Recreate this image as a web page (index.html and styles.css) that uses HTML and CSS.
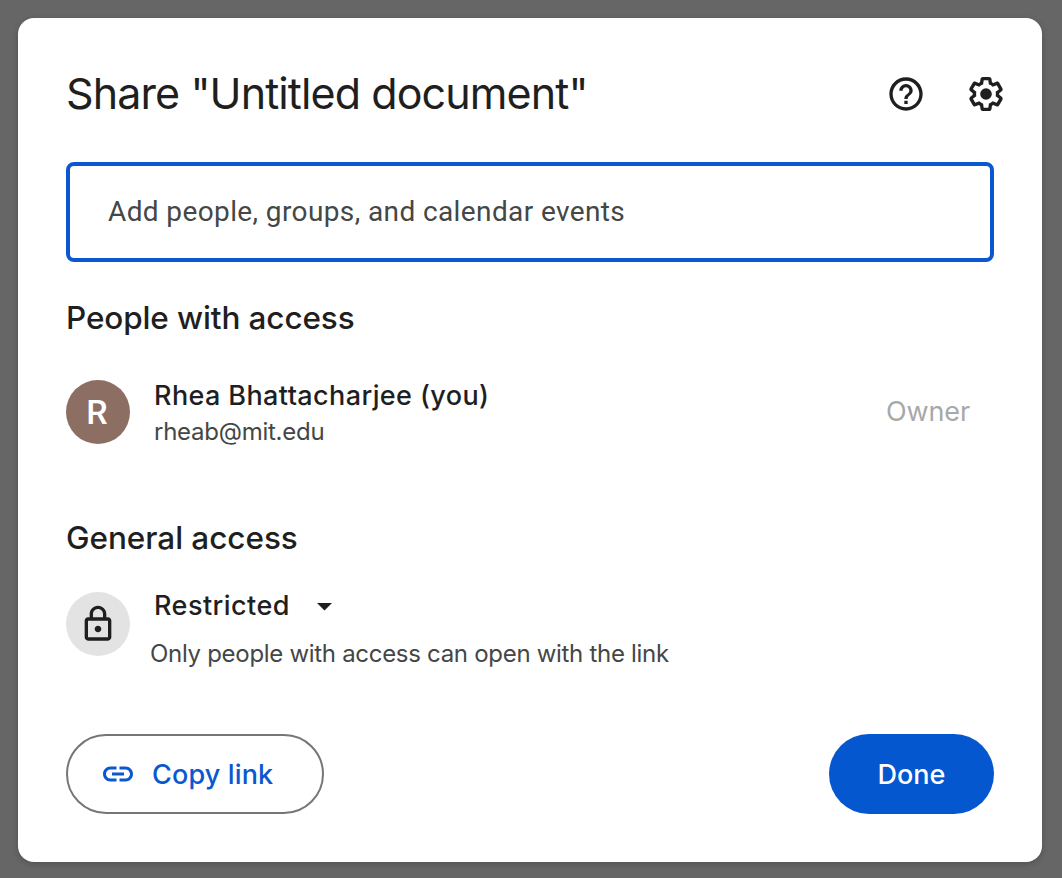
FILE: index.html
```html
<!DOCTYPE html>
<html lang="en">
<head>
<meta charset="utf-8">
<title>Share</title>
<link rel="stylesheet" href="styles.css">
</head>
<body>
<main class="dialog">
  <header class="header">
    <h1 class="title">Share "Untitled document"</h1>
    <div class="actions">
      <svg class="icon" viewBox="0 0 24 24"><path d="M11 18h2v-2h-2v2zm1-16C6.48 2 2 6.48 2 12s4.48 10 10 10 10-4.48 10-10S17.52 2 12 2zm0 18c-4.41 0-8-3.59-8-8s3.59-8 8-8 8 3.59 8 8-3.59 8-8 8zm0-14c-2.21 0-4 1.79-4 4h2c0-1.1.9-2 2-2s2 .9 2 2c0 2-3 1.75-3 5h2c0-2.25 3-2.5 3-5 0-2.21-1.79-4-4-4z"/></svg>
      <svg class="icon" viewBox="0 0 24 24"><path d="M13.85 22.25h-3.7c-.74 0-1.36-.54-1.45-1.27l-.27-1.89c-.27-.14-.53-.29-.79-.46l-1.8.72c-.7.26-1.47-.03-1.81-.65L2.2 15.53c-.35-.66-.2-1.44.36-1.88l1.53-1.19c-.01-.15-.02-.3-.02-.46 0-.15.01-.31.02-.46l-1.52-1.19c-.59-.45-.74-1.26-.37-1.88l1.85-3.19c.34-.62 1.11-.9 1.79-.63l1.81.73c.26-.17.52-.32.78-.46l.27-1.91c.09-.7.71-1.25 1.44-1.25h3.7c.74 0 1.36.54 1.45 1.27l.27 1.89c.27.14.53.29.79.46l1.8-.72c.71-.26 1.48.03 1.82.65l1.84 3.18c.36.66.2 1.44-.36 1.88l-1.52 1.19c.01.15.02.3.02.46s-.01.31-.02.46l1.52 1.19c.56.45.72 1.23.37 1.86l-1.86 3.22c-.34.62-1.11.9-1.8.63l-1.8-.72c-.26.17-.52.32-.78.46l-.27 1.91c-.1.68-.72 1.22-1.46 1.22zm-3.23-2h2.76l.37-2.55.53-.22c.44-.18.88-.44 1.34-.78l.45-.34 2.38.96 1.38-2.4-2.03-1.58.07-.56c.03-.26.06-.51.06-.78s-.03-.53-.06-.78l-.07-.56 2.03-1.58-1.39-2.4-2.39.96-.45-.35c-.42-.32-.87-.58-1.33-.77l-.52-.22-.37-2.55h-2.76l-.37 2.55-.53.21c-.44.19-.88.44-1.34.79l-.45.33-2.38-.95-1.39 2.39 2.03 1.58-.07.56a7 7 0 0 0-.06.79c0 .26.02.53.06.78l.07.56-2.03 1.58 1.38 2.4 2.39-.96.45.35c.43.33.86.58 1.33.77l.53.22.38 2.55z"/><circle cx="12" cy="12" r="3.5"/></svg>
    </div>
  </header>
  <div class="field"><span class="placeholder">Add people, groups, and calendar events</span></div>
  <h2 class="heading people-heading">People with access</h2>
  <section class="row person">
    <div class="avatar">R</div>
    <div class="details">
      <span class="name">Rhea Bhattacharjee (you)</span>
      <span class="email">rheab@mit.edu</span>
    </div>
    <span class="role">Owner</span>
  </section>
  <h2 class="heading general-heading">General access</h2>
  <section class="row access">
    <div class="badge"><svg class="icon" viewBox="0 0 24 24"><path d="M18 8h-1V6c0-2.76-2.24-5-5-5S7 3.24 7 6v2H6c-1.1 0-2 .9-2 2v10c0 1.1.9 2 2 2h12c1.1 0 2-.9 2-2V10c0-1.1-.9-2-2-2zM9 6c0-1.66 1.34-3 3-3s3 1.34 3 3v2H9V6zm9 14H6V10h12v10zm-6-3c1.1 0 2-.9 2-2s-.9-2-2-2-2 .9-2 2 .9 2 2 2z"/></svg></div>
    <div class="access-details">
      <div class="select"><span class="level">Restricted</span><svg class="caret" viewBox="0 0 15 8"><path d="M0 0h15L7.500 7.500z"/></svg></div>
      <span class="hint">Only people with access can open with the link</span>
    </div>
  </section>
  <footer class="footer">
    <button class="button copy"><svg class="link-icon" viewBox="0 0 24 24"><path d="M11 17H7c-2.760 0-5-2.240-5-5s2.240-5 5-5h4v2H7c-1.660 0-3 1.340-3 3s1.340 3 3 3h4v2zm-3-4v-2h8v2H8zm5 4v-2h4c1.660 0 3-1.340 3-3s-1.340-3-3-3h-4V7h4c2.760 0 5 2.240 5 5s-2.240 5-5 5h-4z"/></svg><span>Copy link</span></button>
    <button class="button done">Done</button>
  </footer>
</main>
</body>
</html>
```
FILE: styles.css
```css
* { box-sizing: border-box; }
body {
  margin: 0;
  padding: 18px 20px 16px 18px;
  height: 878px;
  background: #666;
  color: #1f1f1f;
  font-family: Inter, sans-serif;
}
.dialog {
  height: 844px;
  padding: 48px;
  background: #fff;
  border-radius: 16px;
  box-shadow: 0 2px 6px rgba(0, 0, 0, .2);
  white-space: nowrap;
}
.header { display: flex; justify-content: space-between; height: 56px; align-items: center; margin-right: -14px; }
.title { margin: 0; padding-bottom: 2px; font-size: 43px; font-weight: 400; line-height: 56px; letter-spacing: -.9px; }
.actions { display: flex; gap: 40px; margin-right: 2px; }
.icon { display: block; width: 40px; height: 40px; fill: #1f1f1f; }
.field {
  display: flex;
  align-items: center;
  height: 100px;
  margin-top: 40px;
  padding: 0 38px 2px;
  border: 4px solid #0b57d0;
  border-radius: 8px;
  color: #444746;
  font-family: Roboto, sans-serif;
  font-size: 28px;
  letter-spacing: .39px;
}
.heading { margin: 36px 0 0; font-size: 31.5px; line-height: 40px; font-weight: 500; }
.people-heading { letter-spacing: -.12px; }
.general-heading { letter-spacing: -.05px; }
.row { display: flex; }
.person { margin-top: 38px; height: 72px; }
.avatar, .badge {
  display: flex;
  flex: none;
  align-items: center;
  justify-content: center;
  width: 64px;
  height: 64px;
  margin-top: 4px;
  border-radius: 50%;
}
.avatar { padding-right: 2px; background: #8d6e63; color: #fff; font: 500 34px Roboto, sans-serif; }
.badge { margin-top: 8px; background: #e3e3e3; }
.details { display: flex; flex-direction: column; margin-left: 24px; flex: 1; }
.name { font-size: 27px; font-weight: 500; line-height: 40px; letter-spacing: .39px; }
.email { font-size: 24px; line-height: 32px; color: #444746; letter-spacing: -.25px; }
.role { align-self: center; margin-right: 24px; padding-bottom: 2px; font-size: 27px; color: #a8a8a8; letter-spacing: -.1px; }
.person + .heading { margin-top: 70px; }
.access { margin-top: 26px; height: 96px; }
.access-details { display: flex; flex-direction: column; margin-left: 20px; }
.select { display: flex; align-items: center; gap: 27px; height: 44px; padding-left: 4px; font-size: 27px; font-weight: 500; letter-spacing: .45px; }
.level { padding-bottom: 2px; }
.caret { width: 15px; height: 8px; margin-top: 1px; fill: #1f1f1f; }
.hint { margin-top: 10px; line-height: 32px; font-size: 24px; color: #444746; letter-spacing: -.3px; }
.footer { display: flex; justify-content: space-between; margin-top: 54px; }
.button { display: flex; align-items: center; height: 80px; border: 0; border-radius: 40px; font: 500 27px Inter, sans-serif; }
.copy { width: 258px; padding: 0 32px; gap: 16px; background: #fff; border: 2px solid #747775; color: #0b57d0; letter-spacing: .15px; }
.link-icon { width: 36px; height: 36px; fill: #0b57d0; }
.done { width: 165px; justify-content: center; background: #0457cf; color: #fff; }
```
